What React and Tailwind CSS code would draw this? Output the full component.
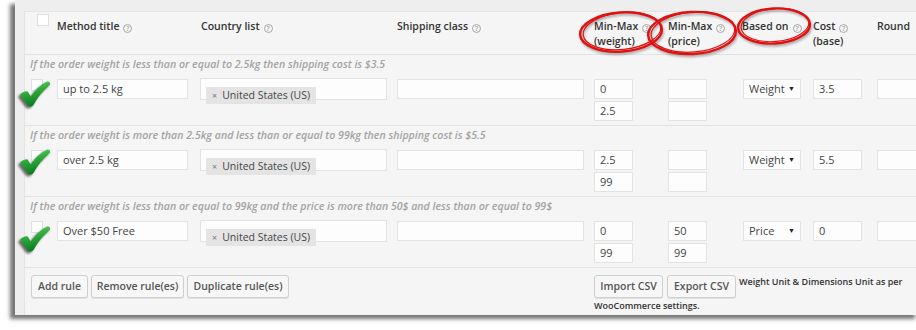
import React from 'react'

const rules = [
  {
    desc: 'If the order weight is less than or equal to 2.5kg then shipping cost is $3.5',
    title: 'up to 2.5 kg', wmin: '0', wmax: '2.5', pmin: '', pmax: '', based: 'Weight', cost: '3.5',
  },
  {
    desc: 'If the order weight is more than 2.5kg and less than or equal to 99kg then shipping cost is $5.5',
    title: 'over 2.5 kg', wmin: '2.5', wmax: '99', pmin: '', pmax: '', based: 'Weight', cost: '5.5',
  },
  {
    desc: 'If the order weight is less than or equal to 99kg and the price is more than 50$ and less than or equal to 99$',
    title: 'Over $50 Free', wmin: '0', wmax: '99', pmin: '50', pmax: '99', based: 'Price', cost: '0',
  },
]

function Help() {
  return (
    <span className="inline-flex items-center justify-center w-[9px] h-[9px] ml-[4px] rounded-full border border-[#a8a8a8] text-[7px] leading-none font-semibold text-[#a8a8a8] align-[-1px]">?</span>
  )
}

function Field({ value, w }) {
  return (
    <div className={`${w} h-[20px] bg-[#fdfdfd] border border-[#e3e3e3] pl-[5px] text-[11px] leading-[18px] text-[#444]`}>
      {value}
    </div>
  )
}

function Check({ top }) {
  return (
    <svg
      viewBox="0 0 30 25"
      className="absolute left-[19px] w-[32px] h-[26px] drop-shadow-[-2px_2px_1px_rgba(0,0,0,0.55)]"
      style={{ top }}
    >
      <defs>
        <linearGradient id={`g${top}`} x1="0" y1="0" x2="0.3" y2="1">
          <stop offset="0" stopColor="#7bd870" />
          <stop offset="0.45" stopColor="#2fae3c" />
          <stop offset="1" stopColor="#0c7a22" />
        </linearGradient>
      </defs>
      <path
        d="M0.5 13.5 Q4 9.5 8 10 L11 15 Q17.5 5 26.5 0.5 Q30 0 29.5 3.5 Q20 11 13.5 23 Q11 26 8 23.5 Z"
        fill={`url(#g${top})`}
      />
    </svg>
  )
}

function Rule({ r }) {
  return (
    <div className="border-b border-[#e2e2e2] pt-[2px] pb-[4px]">
      <div className="pl-[5px] h-[14px] leading-[14px] text-[10.6px] italic font-semibold text-[#a3a3a3] whitespace-nowrap">
        {r.desc}
      </div>
      <div className="flex mt-[8px]">
        <div className="w-[32px] shrink-0">
          <div className="ml-[6px] w-[12px] h-[12px] bg-white border border-[#e0e0e0]" />
        </div>
        <div className="w-[144px] shrink-0"><Field value={r.title} w="w-[131px]" /></div>
        <div className="w-[196px] shrink-0">
          <div className="-ml-[1px] -mt-[1px] w-[187px] h-[22px] bg-[#fdfdfd] border border-[#e3e3e3] pl-[5px] pt-[2px]">
            <div className="inline-flex items-center h-[17px] px-[6px] bg-[#e4e4e4] text-[10.5px] text-[#444]">
              <span className="text-[9px] text-[#777] mr-[5px]">×</span>United States (US)
            </div>
          </div>
        </div>
        <div className="w-[197px] shrink-0"><Field value="" w="w-[187px]" /></div>
        <div className="w-[74px] shrink-0 flex flex-col gap-[2px]">
          <Field value={r.wmin} w="w-[39px]" />
          <Field value={r.wmax} w="w-[39px]" />
        </div>
        <div className="w-[74px] shrink-0 flex flex-col gap-[2px]">
          <Field value={r.pmin} w="w-[39px]" />
          <Field value={r.pmax} w="w-[39px]" />
        </div>
        <div className="w-[71px] shrink-0">
          <div className="ml-[1px] w-[58px] h-[20px] bg-[#fdfdfd] border border-[#e3e3e3] pl-[5px] pr-[5px] flex items-center justify-between text-[11px] text-[#444]">
            <span>{r.based}</span>
            <span className="text-[7px] text-[#222]">▼</span>
          </div>
        </div>
        <div className="w-[64px] shrink-0"><Field value={r.cost} w="w-[49px]" /></div>
        <div className="w-[50px] shrink-0"><Field value="" w="w-[50px]" /></div>
      </div>
    </div>
  )
}

function Btn({ children, w }) {
  return (
    <div className={`${w} shrink-0 h-[23px] flex items-center justify-center bg-[#f7f7f7] border border-[#cfcfcf] rounded-[3px] shadow-[0_1px_0_#e0e0e0] text-[10.5px] font-semibold text-[#555] whitespace-nowrap`}>
      {children}
    </div>
  )
}

export default function App() {
  return (
    <div className="relative w-[916px] h-[330px] overflow-hidden bg-white font-['Open_Sans',sans-serif]">
      <div className="ml-[15px] w-[905px] h-[315px] bg-[#eeeeee] pl-[9px] pt-[11px] shadow-[-5px_4px_4px_rgba(0,0,0,0.55)]">
        <div className="h-full bg-[#f5f5f5] border-l border-t border-[#e4e4e4] overflow-hidden">
          {/* header */}
          <div className="flex h-[43px] border-b border-[#e2e2e2] text-[10.5px] font-semibold text-[#333] leading-[15px]">
            <div className="w-[32px] shrink-0 pt-[2px]">
              <div className="ml-[12px] w-[12px] h-[12px] bg-white border border-[#e0e0e0]" />
            </div>
            <div className="w-[144px] shrink-0 pt-[7px]">Method title<Help /></div>
            <div className="w-[196px] shrink-0 pt-[7px]">Country list<Help /></div>
            <div className="w-[197px] shrink-0 pt-[7px]">Shipping class<Help /></div>
            <div className="w-[74px] shrink-0 pt-[7px]">Min-Max<Help /><br />(weight)</div>
            <div className="w-[74px] shrink-0 pt-[7px]">Min-Max<Help /><br />(price)</div>
            <div className="w-[71px] shrink-0 pt-[7px]">Based on<Help /></div>
            <div className="w-[64px] shrink-0 pt-[7px]">Cost<Help /><br />(base)</div>
            <div className="w-[40px] shrink-0 pt-[7px] whitespace-nowrap">Round</div>
          </div>

          {rules.map((r, i) => <Rule key={i} r={r} />)}

          {/* footer */}
          <div className="flex pt-[7px]">
            <div className="w-[569px] shrink-0 pl-[6px] flex gap-[3px]">
              <Btn w="w-[57px]">Add rule</Btn>
              <Btn w="w-[93px]">Remove rule(es)</Btn>
              <Btn w="w-[102px]">Duplicate rule(es)</Btn>
            </div>
            <div className="shrink-0 w-[310px]">
              <div className="flex items-start">
                <Btn w="w-[69px]">Import CSV</Btn>
                <div className="ml-[4px]"><Btn w="w-[69px]">Export CSV</Btn></div>
                <span className="ml-[3px] text-[9px] font-semibold text-[#333] leading-[14px] whitespace-nowrap">Weight Unit &amp; Dimensions Unit as per</span>
              </div>
              <div className="mt-[1px] text-[9px] font-semibold text-[#333] leading-[14px]">WooCommerce settings.</div>
            </div>
          </div>
        </div>
      </div>

      <Check top={81} />
      <Check top={149} />
      <Check top={226} />

      {/* red marker circles */}
      <svg className="absolute inset-0 w-[916px] h-[330px] pointer-events-none drop-shadow-[1px_2px_1px_rgba(0,0,0,0.3)]" viewBox="0 0 916 330">
        <g fill="none" stroke="#e01111" strokeLinecap="round">
          <ellipse cx="621" cy="32" rx="41" ry="19.5" transform="rotate(-4 621 32)" strokeWidth="2.4" />
          <ellipse cx="622" cy="31" rx="39" ry="18.5" transform="rotate(-6 622 31)" strokeWidth="1.2" />
          <ellipse cx="692" cy="33" rx="44" ry="21" transform="rotate(-3 692 33)" strokeWidth="2.4" />
          <ellipse cx="693" cy="32" rx="42" ry="20" transform="rotate(-5 693 32)" strokeWidth="1.2" />
          <ellipse cx="774" cy="26" rx="36" ry="17.5" transform="rotate(-3 774 26)" strokeWidth="2.4" />
          <ellipse cx="775" cy="25" rx="34" ry="16.5" transform="rotate(-5 775 25)" strokeWidth="1.2" />
        </g>
      </svg>
    </div>
  )
}
